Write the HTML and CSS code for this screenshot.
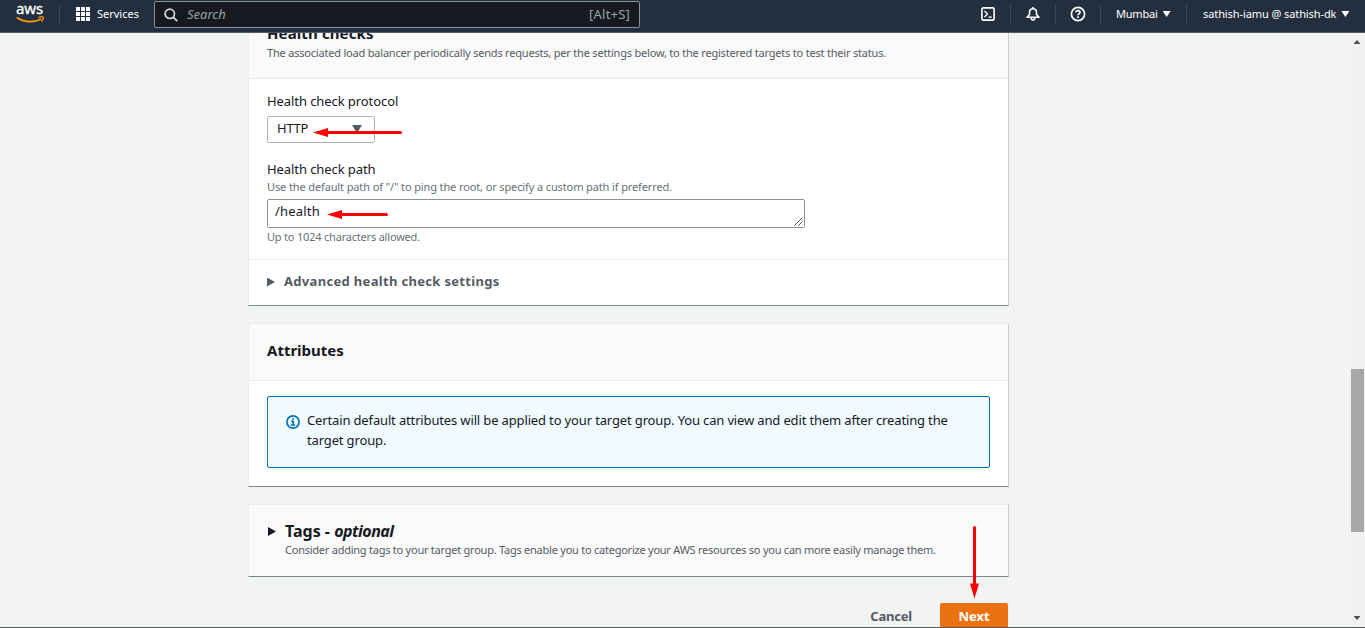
FILE: index.html
```html
<!DOCTYPE html>
<html lang="en">
<head>
<meta charset="utf-8">
<title>Create target group</title>
<link rel="stylesheet" href="styles.css">
</head>
<body>
<header class="topbar">
  <a class="logo"><span class="logo-text">aws</span><svg class="smile" width="30" height="8" viewBox="0 0 30 8"><path d="M.8 1.6C8 6.7 18 6.9 25.2 3" fill="none" stroke="#f90" stroke-width="1.8"/><path d="M22.3 1.5C24.5.6 26.6.6 27.1 1.2C27.6 2 26.8 4 25.4 5.6" fill="none" stroke="#f90" stroke-width="1.3"/></svg></a>
  <i class="divider"></i>
  <a class="services"><svg width="14" height="14" viewBox="0 0 14 14" fill="#fff"><path d="M0 0h4v4H0zM5 0h4v4H5zM10 0h4v4h-4zM0 5h4v4H0zM5 5h4v4H5zM10 5h4v4h-4zM0 10h4v4H0zM5 10h4v4H5zM10 10h4v4h-4z"/></svg><span class="services-text">Services</span></a>
  <div class="search"><svg width="14" height="14" viewBox="0 0 14 14" fill="none" stroke="#d5dbdb" stroke-width="1.7"><circle cx="5.8" cy="5.8" r="4.7"/><path d="M9.2 9.2l4 4"/></svg><span class="search-text">Search</span><span class="shortcut">[Alt+S]</span></div>
  <div class="tools">
    <a class="tool"><svg width="14" height="14" viewBox="0 0 14 14" fill="none" stroke="#fff" stroke-width="1.6"><rect x=".9" y=".9" width="12.2" height="12.2" rx="1.4"/><path d="M3.5 4l3 3-3 3M7.5 10.2h3.3" stroke-width="1.3"/></svg></a>
    <a class="tool"><svg width="14" height="14" viewBox="0 0 14 14" fill="none" stroke="#fff" stroke-width="1.6"><path d="M7 0v2M1 10.3h12L10.5 7.4V5C10.3 3 9 1.8 7 1.8S3.7 3 3.5 5v2.4z" stroke-linejoin="round"/><path d="M5.2 10.8c0 3 3.6 3 3.6 0"/></svg></a>
    <a class="tool"><svg width="16" height="16" viewBox="0 0 16 16" fill="none" stroke="#fff" stroke-width="1.7"><circle cx="8" cy="8" r="6.6"/><path d="M5.9 6.3C6 3.9 10.1 4 10 6.3C10 7.6 8 7.6 8 9.3M8 10.3v1.7"/></svg></a>
    <a class="region"><span class="region-text">Mumbai</span><i class="caret"></i></a>
    <a class="account"><span class="account-text">sathish-iamu @ sathish-dk</span><i class="caret"></i></a>
  </div>
</header>
<div class="viewport">
  <main class="content">
    <section class="card health">
      <div class="card-head health-head">
        <h2 class="title health-title">Health checks</h2>
        <p class="desc health-desc">The associated load balancer periodically sends requests, per the settings below, to the registered targets to test their status.</p>
      </div>
      <div class="form">
        <label class="label">Health check protocol</label>
        <div class="select"><span class="select-text">HTTP</span><i class="select-caret"></i>
          <svg class="arrow arrow-protocol" width="90" height="10" viewBox="0 0 90 10"><path d="M14 5.5h73.5" stroke="#f00" stroke-width="3" stroke-linecap="round"/><path d="M0 5.5L15 1v9z" fill="#f00"/></svg>
        </div>
        <label class="label path">Health check path</label>
        <p class="hint path-hint">Use the default path of "/" to ping the root, or specify a custom path if preferred.</p>
        <div class="textarea"><span class="textarea-text">/health</span>
          <svg class="grip" width="9" height="9" viewBox="0 0 9 9" stroke="#555" fill="none"><path d="M.5 8.5l8-8M4.5 8.5l4-4"/></svg>
          <svg class="arrow arrow-path" width="62" height="10" viewBox="0 0 62 10"><path d="M14 5.5h45.5" stroke="#f00" stroke-width="3" stroke-linecap="round"/><path d="M0 5.5L15 1v9z" fill="#f00"/></svg>
        </div>
        <p class="hint below">Up to 1024 characters allowed.</p>
      </div>
      <div class="advanced"><i class="expand"></i><span class="advanced-text">Advanced health check settings</span></div>
    </section>
    <section class="card attributes">
      <div class="card-head attr-head"><h2 class="title">Attributes</h2></div>
      <div class="alert">
        <svg width="14" height="14" viewBox="0 0 14 14" fill="none" stroke="#0073bb" stroke-width="1.7"><circle cx="7" cy="7" r="6.1"/><path d="M5.2 6.4h2V10M4.8 10h4.4M6.2 4h1.9"/></svg>
        <p class="alert-body">Certain default attributes will be applied to your target group. You can view and edit them after creating the<br>target group.</p>
      </div>
    </section>
    <section class="card tags">
      <i class="expand dark"></i>
      <div>
        <h2 class="title tags-title">Tags - <em class="optional">optional</em></h2>
        <p class="desc tags-desc">Consider adding tags to your target group. Tags enable you to categorize your AWS resources so you can more easily manage them.</p>
      </div>
    </section>
    <div class="actions">
      <a class="cancel">Cancel</a>
      <button class="next">Next</button>
      <svg class="arrow arrow-next" width="10" height="73" viewBox="0 0 10 73"><path d="M5.5 1.5v57" stroke="#f00" stroke-width="3" stroke-linecap="round"/><path d="M5.5 72.5L1 57.5h9z" fill="#f00"/></svg>
    </div>
  </main>
  <div class="scrollbar"><i class="sb-up"></i><div class="thumb"></div><i class="sb-down"></i></div>
</div>
</body>
</html>
```
FILE: styles.css
```css
* { box-sizing: border-box; }
body { margin: 0; width: 1365px; height: 628px; overflow: hidden; display: flex; flex-direction: column; background: #f2f3f3; color: #16191f; font: 13px/20px "Noto Sans", "Open Sans", sans-serif; }
h2, p { margin: 0; }
svg { display: block; flex: none; }
span, em, p, .cancel { white-space: nowrap; }
.topbar { height: 33px; flex: none; display: flex; align-items: flex-start; background: #232f3e; border-bottom: 1px solid #545b64; color: #fff; font-size: 11px; padding-left: 16px; }
.logo { width: 43px; display: flex; flex-direction: column; }
.logo-text { height: 16px; font-size: 15px; line-height: 17px; letter-spacing: -.1px; -webkit-text-stroke: .3px #fff; }
.divider { width: 1px; height: 20px; margin-top: 4px; background: #414750; }
.services { display: flex; align-items: center; height: 28px; gap: 7px; margin-left: 16px; width: 78px; }
.services-text, .region-text, .account-text { padding-bottom: 1px; }
.search { display: flex; align-items: center; width: 486px; height: 27px; margin-top: 1px; padding: 0 9px; background: #16191f; border: 1px solid #879596; border-radius: 2px; color: #95a5a6; font-size: 13px; }
.search span { padding-bottom: 2px; }
.search-text { margin-left: 9px; font-style: italic; }
.shortcut { margin-left: auto; letter-spacing: .2px; }
.tools { margin-left: auto; display: flex; padding-top: 4px; }
.tool { width: 45px; height: 20px; display: flex; align-items: center; justify-content: center; border-right: 1px solid #414750; }
.region { width: 86px; height: 20px; display: flex; align-items: center; padding-left: 15px; border-right: 1px solid #414750; }
.region-text { letter-spacing: -.2px; }
.account { width: 178px; height: 20px; display: flex; align-items: center; padding-left: 16px; }
.account-text { letter-spacing: -.09px; }
.caret { width: 8px; height: 6px; margin-left: 5px; background: #fff; clip-path: polygon(0 0, 100% 0, 50% 100%); }
.viewport { height: 595px; display: flex; overflow: hidden; border-bottom: 1px solid #545b64; }
.content { width: 761px; margin-left: 248px; flex: none; }
.card { background: #fff; border: 1px solid #eaeded; border-right-color: #c8cecf; border-bottom-color: #7b8788; border-radius: 1px; }
.card-head { background: #fafafa; border-bottom: 1px solid #eaeded; padding-left: 18px; }
.health { height: 294px; margin-top: -21px; }
.health-head { height: 66px; padding-top: 9px; }
.title { font-size: 15px; line-height: 22px; font-weight: 700; }
.health-title { letter-spacing: .12px; }
.desc { font-size: 11px; line-height: 16px; color: #545b64; }
.health-desc { margin-top: 1px; letter-spacing: -.2px; }
.form { height: 181px; padding: 12px 0 0 18px; border-bottom: 1px solid #eaeded; }
.label { display: block; height: 20px; letter-spacing: -.08px; }
.select { position: relative; display: flex; align-items: center; width: 108px; height: 27px; margin-top: 5px; padding: 0 12px 1px 9px; border: 1px solid #aab7b8; border-radius: 2px; }
.select-text { letter-spacing: -.25px; padding-bottom: 2px; }
.select-caret { width: 10px; height: 8px; margin-left: auto; background: #545b64; clip-path: polygon(0 0, 100% 0, 50% 100%); }
.arrow { position: absolute; }
.arrow-protocol { left: 45px; top: 10px; }
.path { margin-top: 16px; height: 20px; }
.hint { font-size: 11px; line-height: 16px; color: #687078; letter-spacing: -.12px; }
.textarea { position: relative; width: 538px; height: 29px; margin-top: 4px; padding: 1px 7px; border: 1px solid #879596; border-radius: 2px; }
.textarea-text { letter-spacing: .2px; }
.grip { position: absolute; right: 1px; bottom: 1px; }
.arrow-path { left: 59px; top: 9px; }
.below { margin-top: 1px; letter-spacing: -.2px; }
.advanced { display: flex; align-items: center; height: 45px; padding: 0 0 2px 18px; color: #545b64; font-weight: 700; }
.advanced-text { letter-spacing: .32px; padding-bottom: 2px; }
.expand { width: 8px; height: 9px; margin: 1px 9px 0 0; background: #545b64; clip-path: polygon(0 0, 100% 50%, 0 100%); }
.attributes { height: 164px; margin-top: 17px; }
.attr-head { height: 57px; padding-top: 15px; }
.alert { display: flex; width: 723px; height: 72px; margin: 15px 0 0 18px; padding: 13px 0 0 18px; background: #f1faff; border: 1px solid #0073bb; border-radius: 2px; }
.alert svg { margin: 5px 7px 0 0; }
.alert-body { letter-spacing: -.145px; }
.tags { display: flex; height: 73px; margin-top: 17px; padding: 15px 0 0 19px; background: #fafafa; }
.expand.dark { background: #16191f; margin-top: 7px; }
.tags-title { font-size: 16px; }
.optional { letter-spacing: -.5px; }
.tags-desc { letter-spacing: -.24px; }
.actions { position: relative; display: flex; justify-content: flex-end; margin-top: 26px; height: 40px; padding-right: 1px; font-weight: 700; }
.cancel { margin-right: 28px; line-height: 27px; letter-spacing: -.2px; color: #545b64; }
.next { width: 68px; height: 30px; padding: 0 0 3px; border: 0; border-radius: 2px 2px 0 0; background: #ec7211; color: #fff; font: 700 13px/27px "Noto Sans", "Open Sans", sans-serif; }
.arrow-next { right: 30px; top: -77px; }
.scrollbar { width: 16px; margin-left: auto; display: flex; flex-direction: column; align-items: center; background: #f1f1f1; }
.sb-up, .sb-down { width: 7px; height: 4px; background: #505050; clip-path: polygon(50% 0, 100% 100%, 0 100%); }
.sb-up { margin-top: 7px; }
.sb-down { margin-top: auto; margin-bottom: 7px; transform: scaleY(-1); }
.thumb { width: 13px; height: 163px; margin: 325px 0 0 1px; background: #a8a8a8; }
```
